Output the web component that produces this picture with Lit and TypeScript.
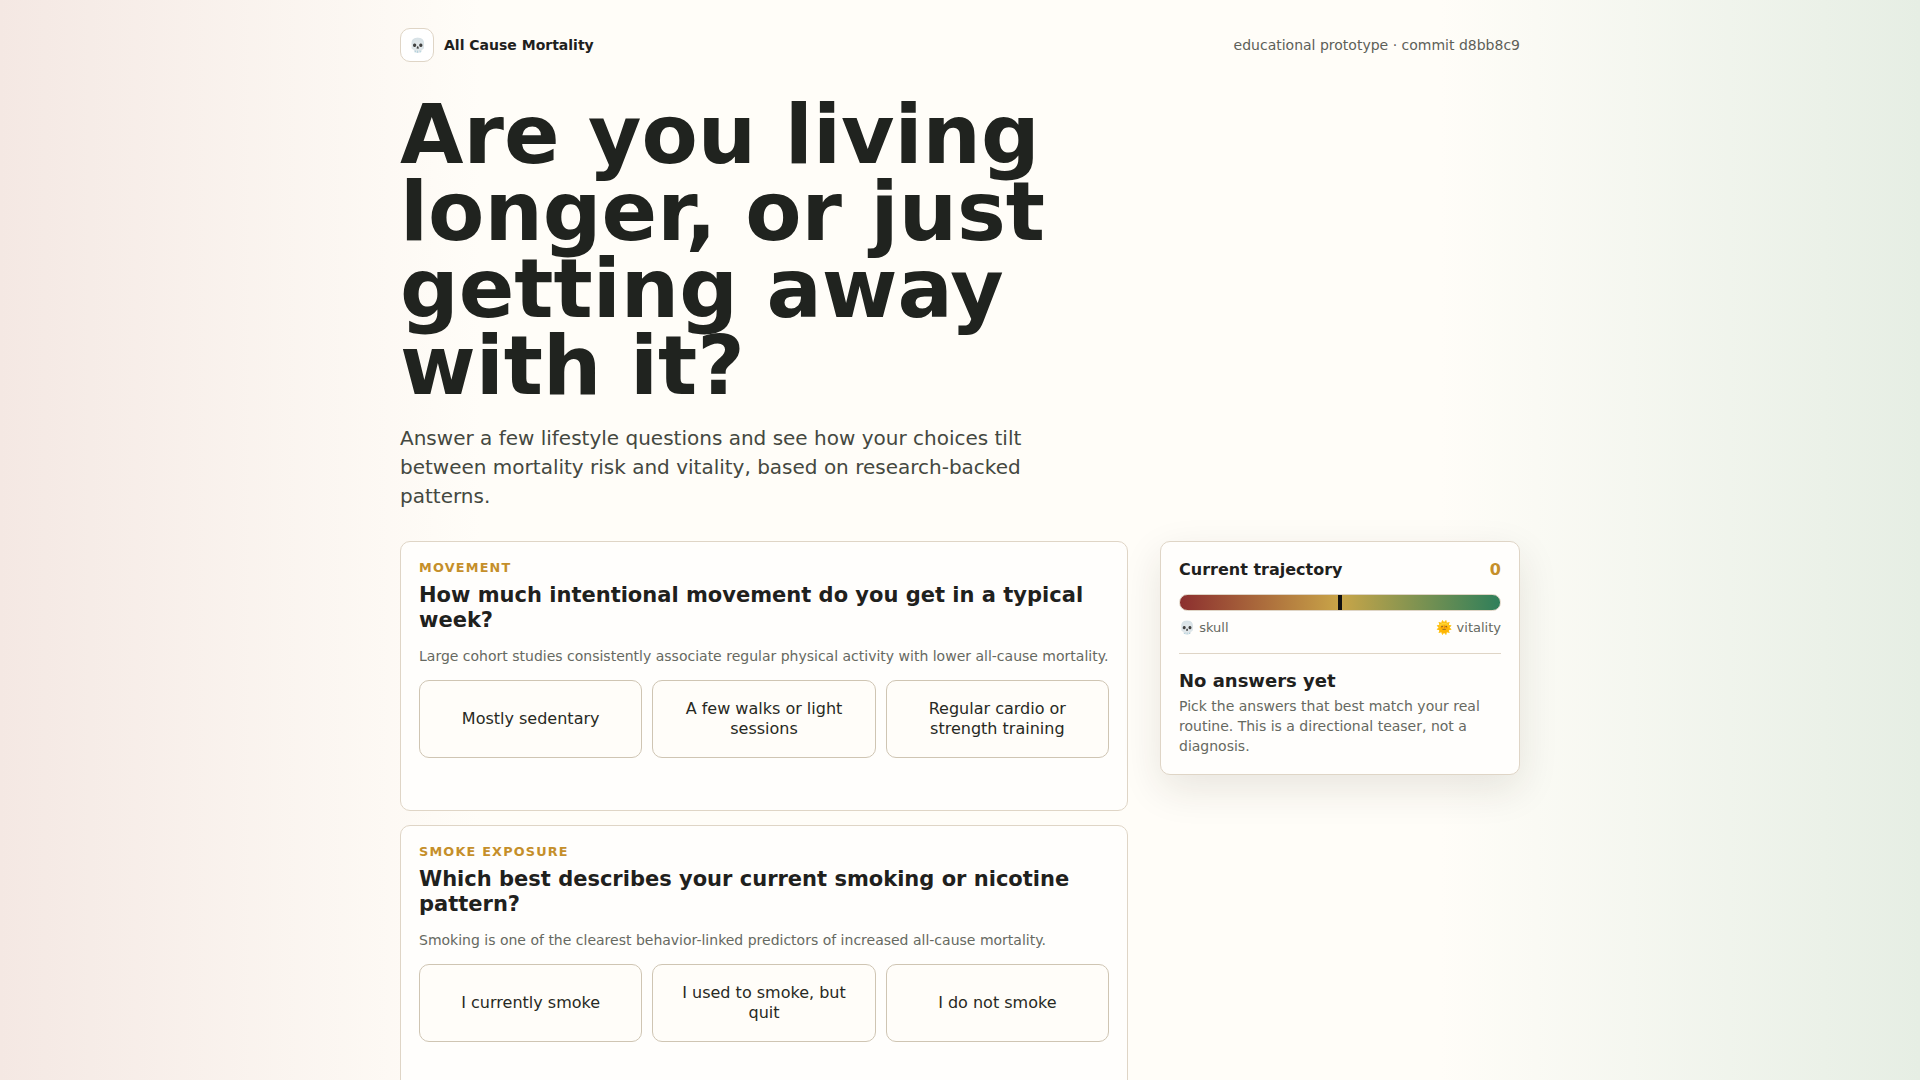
import { LitElement, html, css } from "lit";
import { customElement } from "lit/decorators.js";

const QUESTIONS = [
  {
    tag: "MOVEMENT",
    q: "How much intentional movement do you get in a typical week?",
    note: "Large cohort studies consistently associate regular physical activity with lower all-cause mortality.",
    opts: ["Mostly sedentary", "A few walks or light sessions", "Regular cardio or strength training"],
  },
  {
    tag: "SMOKE EXPOSURE",
    q: "Which best describes your current smoking or nicotine pattern?",
    note: "Smoking is one of the clearest behavior-linked predictors of increased all-cause mortality.",
    opts: ["I currently smoke", "I used to smoke, but quit", "I do not smoke"],
  },
];

@customElement("app-root")
export class AppRoot extends LitElement {
  static styles = css`
    :host {
      display: block;
      height: 1080px;
      overflow: hidden;
      font-family: "DejaVu Sans", sans-serif;
      color: #1f211d;
      background: linear-gradient(90deg, #f4e8e3 0%, #fffdf8 25%, #fffdf8 75%, #e6eee4 100%);
    }
    .page { width: 1120px; margin: 0 auto; }
    .top { display: flex; justify-content: space-between; align-items: center; padding-top: 28px; }
    .brand { display: flex; align-items: center; gap: 10px; font-size: 14px; font-weight: 700; }
    .logo {
      width: 34px; height: 34px; box-sizing: border-box; border: 1px solid #dfd5c6; border-radius: 10px;
      background: #fff; display: flex; align-items: center; justify-content: center; font-size: 14px;
    }
    .meta { font-size: 14px; color: #5d6058; }
    h1 { margin: 34px 0 0; max-width: 760px; font-size: 82px; line-height: 0.94; font-weight: 700; color: #20231f; }
    .lede { margin: 20px 0 0; max-width: 640px; font-size: 20px; line-height: 29px; color: #444840; }
    .grid { display: grid; grid-template-columns: 728px 360px; gap: 32px; margin-top: 30px; align-items: start; }
    .list { display: flex; flex-direction: column; gap: 14px; }
    .card { box-sizing: border-box; border: 1px solid #dfd5c6; border-radius: 10px; background: #fffefc; padding: 18px 18px 0; height: 270px; }
    .tag { font-size: 12.8px; font-weight: 700; letter-spacing: 1.2px; color: #c58f2a; line-height: 15px; }
    h2 { margin: 7.5px 0 0; font-size: 21px; line-height: 25.6px; font-weight: 700; }
    .note { margin: 11.6px 0 0; font-size: 14px; line-height: 20px; color: #666961; }
    .opts { display: grid; grid-template-columns: repeat(3, 1fr); gap: 10px; margin-top: 14.1px; }
    .opt {
      box-sizing: border-box; height: 78px; border: 1px solid #cfc5b3; border-radius: 10px; background: #fffdf9;
      display: flex; align-items: center; justify-content: center; text-align: center;
      padding: 0 16px 0.2px; font-size: 16px; line-height: 19.6px; color: #272923; font-family: inherit;
    }
    .panel {
      box-sizing: border-box; border: 1px solid #dfd5c6; border-radius: 10px; background: #fffefc; padding: 18px;
      box-shadow: 0 14px 40px rgba(50, 40, 20, 0.11); height: 234px;
    }
    .head { display: flex; justify-content: space-between; font-size: 16px; font-weight: 700; line-height: 20px; }
    .score { color: #c58f2a; }
    .bar { position: relative; margin-top: 14px; height: 17px; border-radius: 9px; border: 1px solid #dfd5c6; box-sizing: border-box;
      background: linear-gradient(90deg, #8c2f2f 0%, #c9a548 50%, #2f7f5a 100%); }
    .mark { position: absolute; left: 50%; top: 0; bottom: 0; width: 4px; margin-left: -2px; background: #111; }
    .ends { display: flex; justify-content: space-between; margin-top: 9px; font-size: 13px; line-height: 16px; color: #666961; }
    .rule { height: 1px; background: #dfd5c6; margin: 17px 0 16px; }
    h3 { margin: 0; font-size: 18px; line-height: 22px; font-weight: 700; }
    .panel p { margin: 4px 0 0; font-size: 14px; line-height: 20px; color: #666961; }
  `;

  render() {
    return html`<div class="page">
      <header class="top">
        <div class="brand"><span class="logo">💀</span><span>All Cause Mortality</span></div>
        <div class="meta">educational prototype · commit d8bb8c9</div>
      </header>
      <h1>Are you living longer, or just getting away with it?</h1>
      <p class="lede">Answer a few lifestyle questions and see how your choices tilt between mortality risk and vitality, based on research-backed patterns.</p>
      <div class="grid">
        <div class="list">
          ${QUESTIONS.map(
            (q) => html`<section class="card">
              <div class="tag">${q.tag}</div>
              <h2>${q.q}</h2>
              <p class="note">${q.note}</p>
              <div class="opts">${q.opts.map((o) => html`<button class="opt">${o}</button>`)}</div>
            </section>`
          )}
        </div>
        <aside class="panel">
          <div class="head"><span>Current trajectory</span><span class="score">0</span></div>
          <div class="bar"><span class="mark"></span></div>
          <div class="ends"><span>💀 skull</span><span>🌞 vitality</span></div>
          <div class="rule"></div>
          <h3>No answers yet</h3>
          <p>Pick the answers that best match your real routine. This is a directional teaser, not a diagnosis.</p>
        </aside>
      </div>
    </div>`;
  }
}
